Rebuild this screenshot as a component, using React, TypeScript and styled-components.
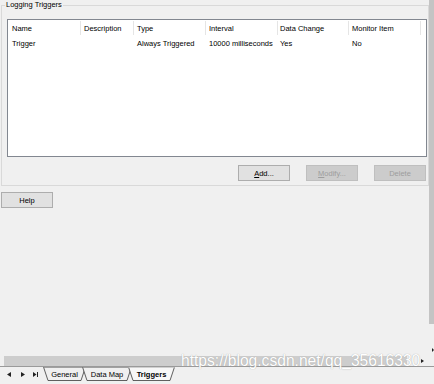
import React from 'react';
import styled, { createGlobalStyle } from 'styled-components';

const GlobalStyle = createGlobalStyle`
  html, body {
    margin: 0;
    padding: 0;
    background: #f0f0f0;
  }
  body {
    font-family: "Liberation Sans", Arial, sans-serif;
    font-size: 7.5px;
    color: #000;
  }
`;

const Screen = styled.div`
  position: relative;
  width: 434px;
  height: 384px;
  display: flex;
  flex-direction: column;
  overflow: hidden;
  background: #f0f0f0;
`;

const Workspace = styled.div`
  display: flex;
  height: 357px;
`;

const Pane = styled.div`
  flex: 1;
  min-width: 0;
  display: flex;
  flex-direction: column;
`;

const SideRail = styled.div`
  width: 5px;
  display: flex;
  flex-direction: column;
  align-items: flex-end;
`;

const RailThumb = styled.div`
  width: 5px;
  height: 324px;
  background: #c4c4c4;
`;

const RailArrow = styled.div`
  margin-top: 24px;
  width: 0;
  height: 0;
  border-top: 2px solid transparent;
  border-bottom: 2px solid transparent;
  border-left: 2px solid #222;
`;

const Group = styled.fieldset`
  margin: 0 0 0 1px;
  padding: 0 1px 4px 5px;
  border: 1px solid #d9d9d9;
  min-width: 0;
`;

const Legend = styled.legend`
  margin-left: -2px;
  padding: 0 1px;
  line-height: 10px;
  font-size: 7.5px;
`;

const ListView = styled.div`
  margin-top: 9px;
  height: 138px;
  box-sizing: border-box;
  border: 1px solid #828790;
  background: #fff;
`;

const Columns = '73px 53px 72px 72px 71px 72px';

const HeaderRow = styled.div`
  display: grid;
  grid-template-columns: ${Columns};
  height: 17px;
`;

const HeaderCell = styled.div<{ $pad: number }>`
  display: flex;
  align-items: center;
  padding-left: ${(p) => p.$pad}px;
  border-right: 1px solid #e5e5e5;
  margin: 1px 0 2px;
  white-space: nowrap;
`;

const DataRow = styled.div`
  display: grid;
  grid-template-columns: ${Columns};
  height: 12px;
`;

const DataCell = styled.div<{ $pad: number }>`
  display: flex;
  align-items: center;
  padding-left: ${(p) => p.$pad}px;
  white-space: nowrap;
`;

const ButtonRow = styled.div`
  display: flex;
  justify-content: flex-end;
  gap: 16px;
  margin-top: 8px;
  padding-right: 1px;
`;

const Button = styled.button<{ $off?: boolean }>`
  width: 52px;
  height: 16px;
  padding: 0;
  box-sizing: border-box;
  font-family: "Liberation Sans", Arial, sans-serif;
  font-size: 7.5px;
  color: ${(p) => (p.$off ? '#9d9d9d' : '#000')};
  background: ${(p) => (p.$off ? '#cccccc' : '#e1e1e1')};
  border: 1px solid ${(p) => (p.$off ? '#bfbfbf' : '#adadad')};
  border-radius: 0;
`;

const HelpButton = styled(Button)`
  margin: 6px 0 0 1px;
`;

const HScrollRow = styled.div`
  display: flex;
  align-items: center;
  height: 10px;
  padding-left: 4px;
`;

const HTrack = styled.div`
  width: 403px;
  height: 10px;
  background: #cdcdcd;
`;

const HArrow = styled.div`
  margin-left: 14px;
  width: 0;
  height: 0;
  border-top: 2px solid transparent;
  border-bottom: 2px solid transparent;
  border-left: 3px solid #222;
`;

const Watermark = styled.div`
  position: absolute;
  left: 181px;
  top: 352px;
  font-family: "Liberation Sans", Arial, sans-serif;
  font-size: 15.6px;
  line-height: 18px;
  color: #fff;
  text-shadow: 0 0 1px #9a9a9a;
  white-space: nowrap;
  pointer-events: none;
`;

const TabBar = styled.div`
  display: flex;
  align-items: flex-start;
  height: 17px;
  border-top: 1px solid #9a9a9a;
`;

const NavGroup = styled.div`
  display: flex;
  align-items: center;
  height: 14px;
  width: 43px;
`;

const NavIcon = styled.svg<{ $x: number }>`
  margin-left: ${(p) => p.$x}px;
  flex-shrink: 0;
`;

const Tab = styled.div<{ $w: number; $active?: boolean; $z: number }>`
  position: relative;
  z-index: ${(p) => p.$z};
  width: ${(p) => p.$w}px;
  height: 14px;
  margin-left: -4px;
  display: flex;
  align-items: center;
  justify-content: center;
  font-weight: ${(p) => (p.$active ? 700 : 400)};
  &:first-child {
    margin-left: 0;
  }
`;

const TabShape = styled.svg`
  position: absolute;
  left: 0;
  top: 0;
`;

const TabLabel = styled.span`
  position: relative;
  margin-top: 1px;
`;

const TabList = styled.div`
  display: flex;
`;

const columns = [
  { title: 'Name', pad: 4 },
  { title: 'Description', pad: 3 },
  { title: 'Type', pad: 3 },
  { title: 'Interval', pad: 3 },
  { title: 'Data Change', pad: 2 },
  { title: 'Monitor Item', pad: 3 },
];

const rows = [
  ['Trigger', '', 'Always Triggered', '10000 milliseconds', 'Yes', 'No'],
];

const tabs = [
  { label: 'General', w: 43, z: 1 },
  { label: 'Data Map', w: 50, z: 2 },
  { label: 'Triggers', w: 47, z: 3, active: true },
];

const SheetTab = ({ label, w, z, active }: { label: string; w: number; z: number; active?: boolean }) => (
  <Tab $w={w} $z={z} $active={active}>
    <TabShape width={w} height={14}>
      <polygon
        points={`0.5,0 ${w - 0.5},0 ${w - 5},13.5 5,13.5`}
        fill={active ? '#f7f7f7' : '#f0f0f0'}
        stroke="#3a3a3a"
        strokeWidth={0.8}
      />
      <line x1={0} y1={0.3} x2={w} y2={0.3} stroke={active ? '#f7f7f7' : '#9a9a9a'} strokeWidth={0.6} />
    </TabShape>
    <TabLabel>{label}</TabLabel>
  </Tab>
);

export default function App() {
  return (
    <Screen>
      <GlobalStyle />
      <Workspace>
        <Pane>
          <Group>
            <Legend>Logging Triggers</Legend>
            <ListView>
              <HeaderRow>
                {columns.map((c) => (
                  <HeaderCell key={c.title} $pad={c.pad}>
                    {c.title}
                  </HeaderCell>
                ))}
              </HeaderRow>
              {rows.map((r) => (
                <DataRow key={r[0]}>
                  {r.map((v, i) => (
                    <DataCell key={i} $pad={columns[i].pad}>
                      {v}
                    </DataCell>
                  ))}
                </DataRow>
              ))}
            </ListView>
            <ButtonRow>
              <Button>
                <u>A</u>dd...
              </Button>
              <Button $off disabled>
                <u>M</u>odify...
              </Button>
              <Button $off disabled>
                Delete
              </Button>
            </ButtonRow>
          </Group>
          <HelpButton>Help</HelpButton>
        </Pane>
        <SideRail>
          <RailThumb />
          <RailArrow />
        </SideRail>
      </Workspace>
      <HScrollRow>
        <HTrack />
        <HArrow />
      </HScrollRow>
      <TabBar>
        <NavGroup>
          <NavIcon $x={7} width="4" height="5" viewBox="0 0 4 5">
            <polygon points="4,0 4,5 0,2.5" fill="#222" />
          </NavIcon>
          <NavIcon $x={10} width="4" height="5" viewBox="0 0 4 5">
            <polygon points="0,0 0,5 4,2.5" fill="#222" />
          </NavIcon>
          <NavIcon $x={8} width="5" height="5" viewBox="0 0 5 5">
            <polygon points="0,0 0,5 3.5,2.5" fill="#222" />
            <rect x="4" y="0" width="1" height="5" fill="#222" />
          </NavIcon>
        </NavGroup>
        <TabList>
          {tabs.map((t) => (
            <SheetTab key={t.label} label={t.label} w={t.w} z={t.z} active={t.active} />
          ))}
        </TabList>
      </TabBar>
      <Watermark>https://blog.csdn.net/qq_35616330</Watermark>
    </Screen>
  );
}
